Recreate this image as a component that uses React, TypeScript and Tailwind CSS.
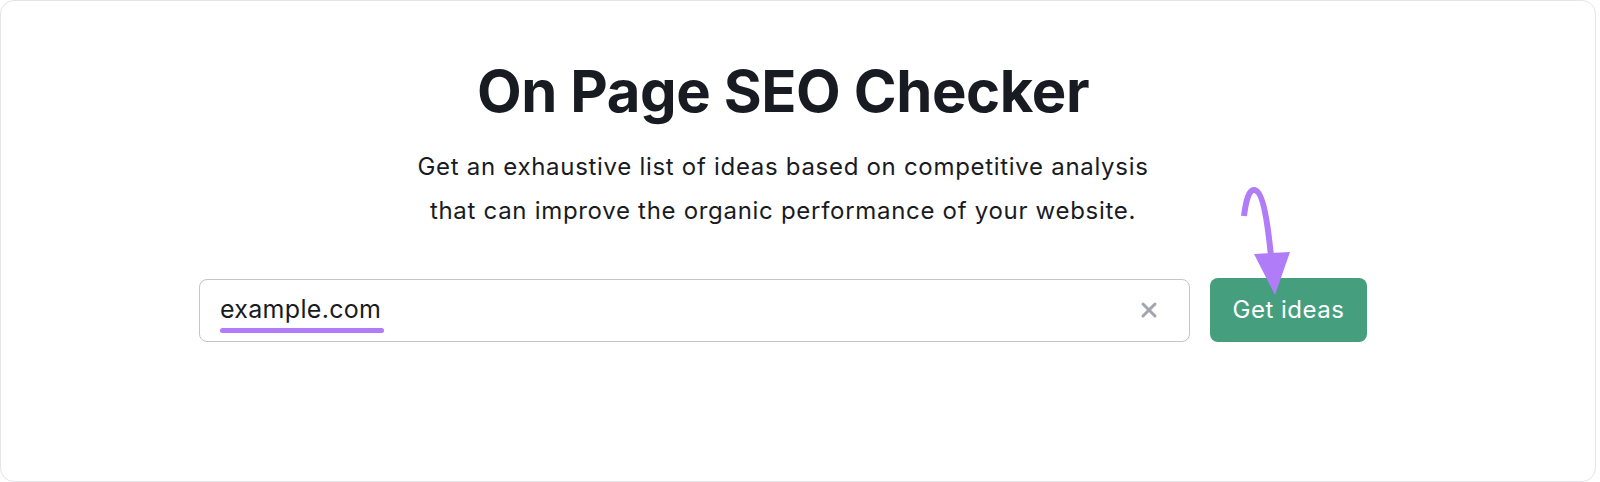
import { X } from "lucide-react"

export default function App() {
  return (
    <div className="h-[482px] w-[1600px] overflow-hidden bg-white font-['Inter',sans-serif]">
      <div className="flex h-[482px] w-[1596px] flex-col items-center rounded-[14px] border border-[#e4e4e9] bg-white pr-[30px] pt-[61px]">
        <h1 className="text-[58px] font-bold leading-none tracking-[-0.4px] text-[#191b23]">
          On Page SEO Checker
        </h1>
        <p className="mt-[25px] text-center text-[24px] leading-[44px] tracking-[0.7px] text-[#191b23]">
          Get an exhaustive list of ideas based on competitive analysis
          <br />
          that can improve the organic performance of your website.
        </p>

        <div className="mt-[45px] flex items-center gap-5">
          <div className="flex h-[63px] w-[991px] items-center rounded-lg border border-[#c4c5cc] bg-white pl-5 pr-[28px]">
            <div className="relative flex-1">
              <span className="text-[25px] leading-none tracking-[0.3px] text-[#191b23]">example.com</span>
              <div className="absolute left-0 top-[31px] h-[5px] w-[164px] rounded-full bg-[#b07cf7]" />
            </div>
            <X className="h-[24px] w-[24px] text-[#a3a4ad]" strokeWidth={3} />
          </div>

          <div className="relative">
            <button className="h-[64px] w-[157px] rounded-lg bg-[#459f7f] text-[24px] tracking-[0.5px] text-white">
              Get ideas
            </button>
            <svg
              className="absolute left-[25px] top-[-94px]"
              width="60"
              height="114"
              viewBox="0 0 60 114"
              fill="none"
            >
              <path
                d="M9 32 C 11 16, 14 6, 19 6 C 27 6, 32 32, 36 72"
                stroke="#b07cf7"
                strokeWidth="6"
                strokeLinecap="butt"
              />
              <polygon points="19,70 55,68 40,111" fill="#b07cf7" />
            </svg>
          </div>
        </div>
      </div>
    </div>
  )
}
